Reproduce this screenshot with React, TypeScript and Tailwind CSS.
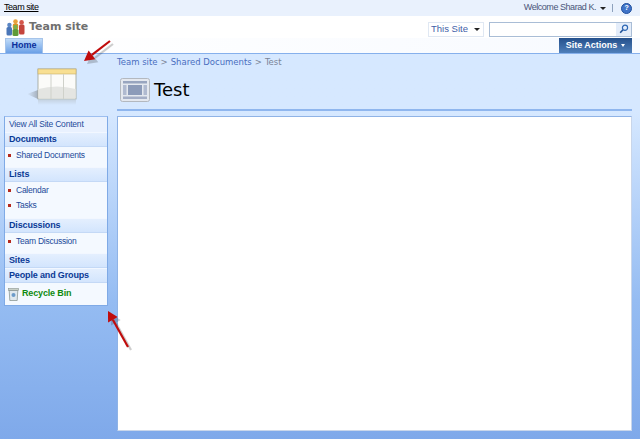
const font = { fontFamily: '"Liberation Sans", Arial, sans-serif' };
const wide = { fontFamily: '"DejaVu Sans", sans-serif' };

function Bullet() {
  return <span className="w-[3px] h-[3px] bg-[#b5291c] mr-[5px] shrink-0" />;
}

function NavHeading({ label, last }: { label: string; last?: boolean }) {
  return (
    <div className={`h-[15px] flex items-center pl-[4px] bg-gradient-to-b from-[#e4effe] to-[#d3e5fd] border-t border-[#f2f7ff] text-[9px] tracking-[-0.15px] font-bold text-[#0a3a96] ${last ? '' : 'border-b border-b-[#c4d9f6]'}`}>
      {label}
    </div>
  );
}

function NavItem({ label }: { label: string }) {
  return (
    <div className="h-[15px] flex items-center pl-[3px] text-[8.5px] tracking-[-0.25px] text-[#234a9a]">
      <Bullet />
      {label}
    </div>
  );
}

function TeamLogo() {
  return (
    <svg width="19" height="17" viewBox="0 0 19 17" className="mr-[5px] ml-[1px]">
      <circle cx="3.4" cy="6" r="2.2" fill="#5b86c4" />
      <rect x="0.5" y="8" width="5.5" height="8.5" rx="1.5" fill="#4a76b8" />
      <circle cx="15.6" cy="3.4" r="2.3" fill="#d4564a" />
      <rect x="13" y="5.5" width="5.5" height="10" rx="1.5" fill="#c4443c" />
      <circle cx="9.5" cy="2.6" r="2.3" fill="#e9a23a" />
      <rect x="6.8" y="4.5" width="5.4" height="6" rx="1.5" fill="#e09024" />
      <circle cx="9.5" cy="8" r="2.2" fill="#7bb04a" />
      <rect x="6.5" y="10" width="6" height="7" rx="1.5" fill="#5f9a38" />
    </svg>
  );
}

function LibraryIcon() {
  return (
    <svg width="68" height="46" viewBox="0 0 68 46">
      <defs>
        <linearGradient id="fade" x1="0" y1="0" x2="0" y2="1">
          <stop offset="0" stopColor="#c6d4e4" />
          <stop offset="1" stopColor="#d6e8ff" />
        </linearGradient>
        <linearGradient id="wedge" x1="0" y1="0" x2="1" y2="0">
          <stop offset="0" stopColor="#d6e8ff" />
          <stop offset="1" stopColor="#a4afbc" />
        </linearGradient>
      </defs>
      <polygon points="2,27 13,23 13,32" fill="url(#wedge)" />
      <rect x="13" y="2" width="38" height="30" fill="#fbfbf9" stroke="#9fa294" strokeWidth="0.8" />
      <path d="M13.4 22 Q32 17 50.6 22 V31.6 H13.4 Z" fill="#e4e5e2" />
      <rect x="13" y="2" width="38" height="5" fill="#f8df92" stroke="#c7ae68" strokeWidth="0.6" />
      <line x1="26" y1="7" x2="26" y2="32" stroke="#cfd1ca" />
      <line x1="38.5" y1="7" x2="38.5" y2="32" stroke="#cfd1ca" />
      <rect x="13" y="33" width="38" height="5" fill="url(#fade)" />
    </svg>
  );
}

function PageIcon() {
  return (
    <svg width="30" height="24" viewBox="0 0 30 24" className="mr-[4px]">
      <rect x="0.5" y="0.5" width="29" height="23" rx="2" fill="#e4e8ef" stroke="#b3b8bf" />
      <rect x="3" y="3" width="24" height="2.5" fill="#98a5bf" />
      <rect x="3" y="7" width="3.5" height="10" fill="#b0bad0" />
      <rect x="8" y="7" width="14" height="10" fill="#8c9bb9" />
      <rect x="23.5" y="7" width="3.5" height="10" fill="#b0bad0" />
      <rect x="3" y="18.5" width="24" height="2.5" fill="#a4aec6" />
    </svg>
  );
}

function RecycleIcon() {
  return (
    <svg width="11" height="13" viewBox="0 0 11 13" className="mr-[3px] ml-[3px]">
      <rect x="0.5" y="0.5" width="10" height="2" fill="#c8d0c8" stroke="#8b958f" strokeWidth="0.6" />
      <path d="M1.2 2.5h8.6l-0.6 10h-7.4z" fill="#dfe8ee" stroke="#7f8c88" strokeWidth="0.7" />
      <circle cx="5.5" cy="7" r="2" fill="#6c9bc9" />
    </svg>
  );
}

function Arrow({ x1, y1, x2, y2 }: { x1: number; y1: number; x2: number; y2: number }) {
  const dx = x2 - x1;
  const dy = y2 - y1;
  const len = Math.hypot(dx, dy);
  const ux = dx / len;
  const uy = dy / len;
  const bx = x2 - ux * 10;
  const by = y2 - uy * 10;
  const head = `${x2},${y2} ${bx - uy * 5.5},${by + ux * 5.5} ${bx + uy * 5.5},${by - ux * 5.5}`;
  return (
    <g>
      <g transform="translate(3 3)" opacity="0.22">
        <line x1={x1} y1={y1} x2={bx} y2={by} stroke="#222" strokeWidth="2.2" />
        <polygon points={head} fill="#222" />
      </g>
      <line x1={x1} y1={y1} x2={bx} y2={by} stroke="#c00c0c" strokeWidth="2.2" />
      <polygon points={head} fill="#c00c0c" />
    </g>
  );
}

export default function App() {
  return (
    <div style={font} className="relative w-[640px] h-[439px] overflow-hidden flex flex-col bg-[#d6e8ff]">
      {/* Global bar */}
      <div className="h-[16px] shrink-0 bg-[#e9f1fd] flex items-center justify-between pl-[4px] pr-[8px] text-[9px] tracking-[-0.45px]">
        <span className="underline text-black">Team site</span>
        <div className="flex items-center text-[#4a5578]">
          <span>Welcome Sharad K.</span>
          <span className="ml-[4px] w-0 h-0 border-x-[3px] border-x-transparent border-t-[3px] border-t-[#222]" />
          <span className="ml-[6px] mr-[8px] w-px h-[8px] bg-[#8ea2bd]" />
          <span className="w-[11px] h-[11px] rounded-full bg-[#3f73c8] border border-[#1f4f9e] text-white text-[7px] font-bold flex items-center justify-center">?</span>
        </div>
      </div>

      {/* Site header */}
      <div className="h-[22px] shrink-0 bg-white flex items-center justify-between pl-[5px] pr-[8px]">
        <div className="flex items-center">
          <TeamLogo />
          <span style={wide} className="text-[11px] font-bold text-[#6f6f6f] mt-[1px] -ml-[1px]">Team site</span>
        </div>
        <div className="flex items-center mt-[4px]">
          <div className="w-[56px] h-[15px] bg-white border border-[#e0e8f3] flex items-center justify-between pl-[2px] pr-[3px] mr-[5px] text-[9.5px] text-[#3f5ea8]">
            This Site
            <span className="w-0 h-0 border-x-[3px] border-x-transparent border-t-[3px] border-t-[#222]" />
          </div>
          <div className="w-[143px] h-[15px] bg-white border border-[#a9bdd6] flex items-center justify-end">
            <div className="w-[15px] h-full bg-[#e4edfa] flex items-center justify-center">
              <svg width="10" height="10" viewBox="0 0 10 10">
                <circle cx="6" cy="3.8" r="2.6" fill="none" stroke="#2b66b4" strokeWidth="1.2" />
                <line x1="4" y1="5.8" x2="1.2" y2="8.8" stroke="#1d4f96" strokeWidth="1.6" />
              </svg>
            </div>
          </div>
        </div>
      </div>

      {/* Tabs */}
      <div className="h-[15px] shrink-0 bg-gradient-to-r from-white to-[#f7faff] flex items-end justify-between pl-[5px] pr-[8px] border-b border-[#86b0ec] box-content">
        <div className="w-[38px] h-[15px] bg-gradient-to-b from-[#c0dbf8] to-[#6ba0e6] border border-b-0 border-[#a6c4ea] text-[9px] font-bold text-[#0b2f9c] flex items-center justify-center">
          Home
        </div>
        <div className="w-[73px] h-[15px] bg-gradient-to-b from-[#24508c] to-[#4f7fba] text-[9px] font-bold text-white flex items-center justify-center gap-[4px]">
          Site Actions
          <span className="w-0 h-0 border-x-[2.5px] border-x-transparent border-t-[3px] border-t-white" />
        </div>
      </div>

      {/* Body */}
      <div className="flex-1 flex bg-gradient-to-b from-[#d6e8ff] from-[15%] via-[#95bcf2] via-[64%] to-[#7fa9ea]">
        {/* Left column */}
        <div className="w-[117px] shrink-0 flex flex-col">
          <div className="h-[62px] flex items-start justify-center pt-[13px] pl-[1px] shrink-0">
            <LibraryIcon />
          </div>
          <div className="ml-[4px] w-[104px] bg-[#f4f9ff] border border-[#7faae6] border-t-[#9dbff0]">
            <div className="h-[15px] flex items-center pl-[4px] text-[8.5px] tracking-[-0.2px] text-[#234a9a] bg-[#e9f1fe]">
              View All Site Content
            </div>
            <NavHeading label="Documents" />
            <div className="pt-[1px] pb-[4px]">
              <NavItem label="Shared Documents" />
            </div>
            <NavHeading label="Lists" />
            <div className="pt-[1px] pb-[5px]">
              <NavItem label="Calendar" />
              <NavItem label="Tasks" />
            </div>
            <NavHeading label="Discussions" />
            <div className="pt-[1px] pb-[4px]">
              <NavItem label="Team Discussion" />
            </div>
            <NavHeading label="Sites" />
            <NavHeading label="People and Groups" />
            <div className="h-[22px] flex items-center text-[9px] tracking-[-0.15px] font-bold text-[#0f8a0f]">
              <RecycleIcon />
              Recycle Bin
            </div>
          </div>
        </div>

        {/* Main column */}
        <div className="flex-1 flex flex-col pr-[8px]">
          <div style={wide} className="h-[15px] shrink-0 flex items-center text-[8.5px] text-[#4a6fc0] mt-[1px]">
            Team site
            <span className="mx-[3px] text-[#7b8598]">&gt;</span>
            Shared Documents
            <span className="mx-[3px] text-[#7b8598]">&gt;</span>
            <span className="text-[#7b8598]">Test</span>
          </div>
          <div style={wide} className="h-[39px] shrink-0 flex items-center pl-[3px] text-[18px] text-black">
            <PageIcon />
            Test
          </div>
          <div className="h-[2px] shrink-0 bg-[#8fb6ee]" />
          <div className="h-[5px] shrink-0" />
          <div className="h-[315px] shrink-0 bg-white border-r border-b border-[#c9d6ea] border-t border-l border-t-[#8fb3e6] border-l-[#8fb3e6]" />
        </div>
      </div>

      {/* Annotation arrows on top of the capture */}
      <svg width="640" height="439" className="absolute left-0 top-0 pointer-events-none">
        <Arrow x1={110} y1={41} x2={84} y2={61} />
        <Arrow x1={128} y1={347} x2={108} y2={311} />
      </svg>
    </div>
  );
}
